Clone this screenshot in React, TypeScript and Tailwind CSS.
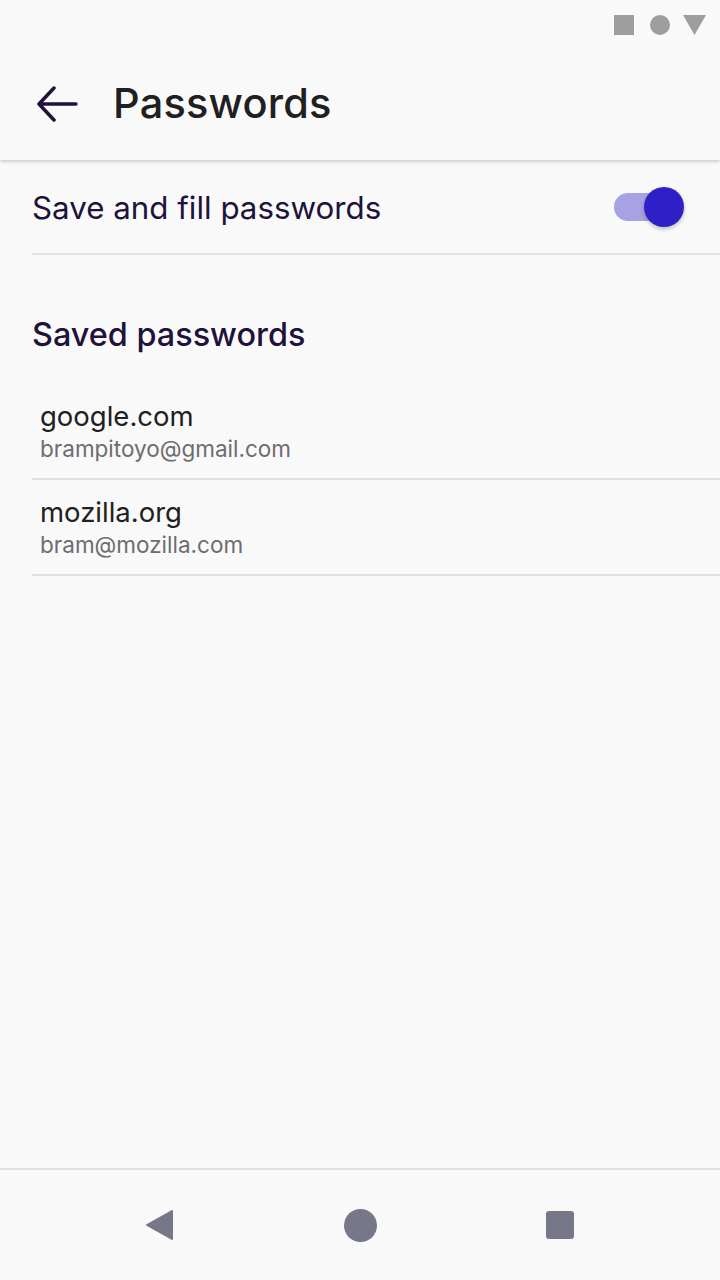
import React from "react";

const logins = [
  { site: "google.com", user: "brampitoyo@gmail.com" },
  { site: "mozilla.org", user: "bram@mozilla.com" },
];

const App = () => {
  return (
    <div
      className="w-[720px] h-[1280px] bg-[#f9f9fa] flex flex-col overflow-hidden"
      style={{ fontFamily: "Inter, 'Noto Sans', sans-serif" }}
    >
      {/* status bar */}
      <div className="h-[48px] flex items-center justify-end pr-[14px] pt-[2px]">
        <div className="w-[20px] h-[20px] bg-[#9e9e9e]" />
        <div className="w-[20px] h-[20px] rounded-full bg-[#9e9e9e] ml-[16px]" />
        <svg width="23" height="20" viewBox="0 0 23 20" className="ml-[13px]">
          <path d="M0 0 H23 L11.5 20 Z" fill="#9e9e9e" />
        </svg>
      </div>

      {/* toolbar */}
      <div className="h-[112px] flex items-center shadow-[0_2px_3px_rgba(32,18,58,0.18)] relative z-10 bg-[#f9f9fa]">
        <button className="w-[113px] h-full flex items-center pl-[36px]">
          <svg width="42" height="36" viewBox="0 0 42 36" fill="none">
            <path
              d="M40 18 H3 M18 2 L3 18 L18 34"
              stroke="#20123a"
              strokeWidth="3.5"
              strokeLinecap="round"
              strokeLinejoin="round"
            />
          </svg>
        </button>
        <h1 className="text-[41.5px] font-medium text-[#202020] tracking-[0.2px] pb-[2px]">Passwords</h1>
      </div>

      {/* save toggle */}
      <div className="ml-[32px] h-[95px] flex items-center justify-between border-b-2 border-[#e1e0e6] pr-[36px]">
        <span className="text-[31.3px] text-[#20123a] pt-[4px]">Save and fill passwords</span>
        <div className="relative w-[70px] h-[40px] flex items-center">
          <div className="w-[48px] h-[28px] rounded-full bg-[#a7a2e3]" />
          <div className="absolute right-0 top-0 w-[40px] h-[40px] rounded-full bg-[#2e1fc6] shadow-[0_2px_4px_rgba(0,0,0,0.25)]" />
        </div>
      </div>

      {/* saved logins */}
      <div className="pl-[32px] pt-[64px]">
        <h2 className="text-[32.4px] font-medium text-[#20123a] leading-none mb-[33px]">Saved passwords</h2>
        {logins.map((item, key) => (
          <div key={key} className="h-[96px] border-b-2 border-[#e1e0e6] pl-[8px] flex flex-col justify-center">
            <div className="text-[27.5px] text-[#202020] leading-[35px]">{item.site}</div>
            <div className="text-[22.5px] text-[#6d6d6e] leading-[29px]">{item.user}</div>
          </div>
        ))}
      </div>

      <div className="flex-1" />

      {/* nav bar */}
      <div className="h-[112px] border-t-2 border-[#e1e0e6] flex items-center justify-center">
        <div className="w-[200px] flex justify-center">
          <svg width="28" height="30" viewBox="0 0 28 30">
            <path d="M26 1 V29 L1 15 Z" fill="#77778a" stroke="#77778a" strokeWidth="2" strokeLinejoin="round" />
          </svg>
        </div>
        <div className="w-[200px] flex justify-center">
          <div className="w-[33px] h-[33px] rounded-full bg-[#77778a]" />
        </div>
        <div className="w-[200px] flex justify-center">
          <div className="w-[28px] h-[28px] rounded-[3px] bg-[#77778a]" />
        </div>
      </div>
    </div>
  );
};

export default App;
